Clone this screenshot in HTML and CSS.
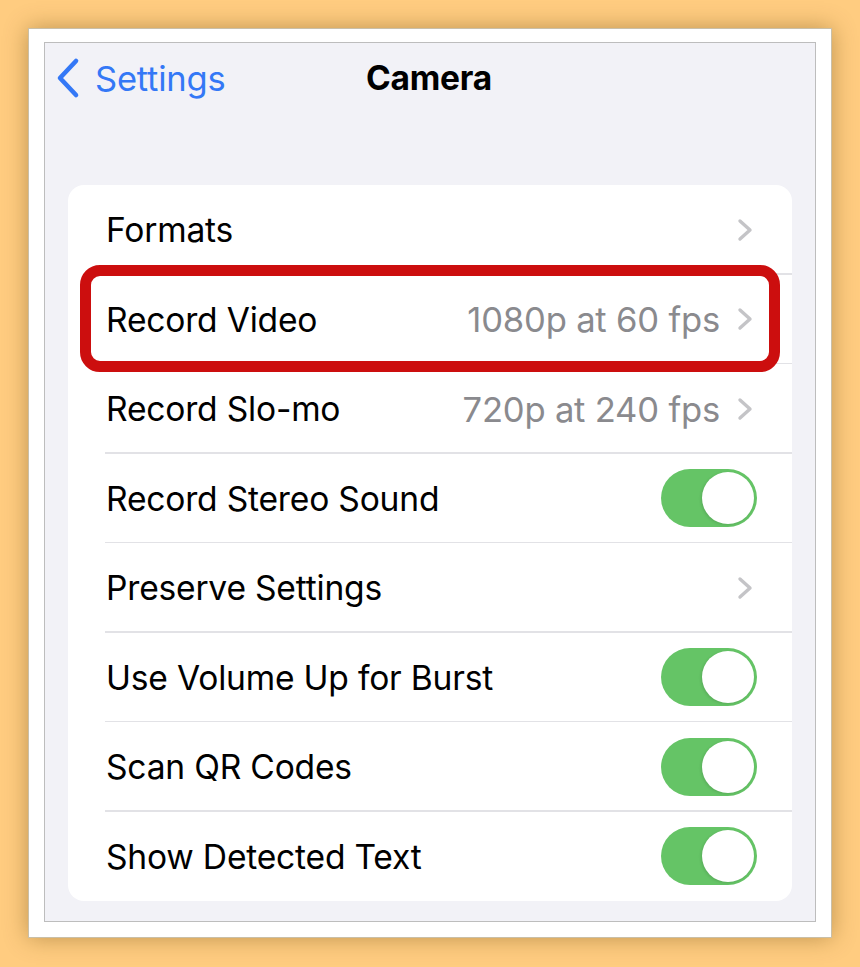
FILE: index.html
```html
<!DOCTYPE html>
<html>
<head>
<meta charset="utf-8">
<link rel="stylesheet" href="styles.css">
</head>
<body>
<div class="frame">
  <div class="screen">
    <div class="nav">
      <div class="back">
        <svg class="back-icon" width="26" height="42" viewBox="0 0 26 42"><polyline points="21,4 5,21 21,38" fill="none" stroke="#3478F6" stroke-width="4.6" stroke-linecap="round" stroke-linejoin="round"/></svg>
        <span class="back-label">Settings</span>
      </div>
      <div class="title">Camera</div>
    </div>
    <div class="card">
      <div class="row"><span class="label">Formats</span><span class="right"><svg class="chev" width="16" height="24" viewBox="0 0 16 24"><polyline points="3,3 13,12 3,21" fill="none" stroke="#C4C4C7" stroke-width="3.4" stroke-linecap="round" stroke-linejoin="round"/></svg></span></div>
      <div class="row"><span class="label">Record Video</span><span class="right"><span class="value">1080p at 60 fps</span><svg class="chev" width="16" height="24" viewBox="0 0 16 24"><polyline points="3,3 13,12 3,21" fill="none" stroke="#C4C4C7" stroke-width="3.4" stroke-linecap="round" stroke-linejoin="round"/></svg></span></div>
      <div class="row"><span class="label">Record Slo-mo</span><span class="right"><span class="value">720p at 240 fps</span><svg class="chev" width="16" height="24" viewBox="0 0 16 24"><polyline points="3,3 13,12 3,21" fill="none" stroke="#C4C4C7" stroke-width="3.4" stroke-linecap="round" stroke-linejoin="round"/></svg></span></div>
      <div class="row"><span class="label">Record Stereo Sound</span><span class="right toggle-wrap"><span class="toggle"><span class="knob"></span></span></span></div>
      <div class="row"><span class="label">Preserve Settings</span><span class="right"><svg class="chev" width="16" height="24" viewBox="0 0 16 24"><polyline points="3,3 13,12 3,21" fill="none" stroke="#C4C4C7" stroke-width="3.4" stroke-linecap="round" stroke-linejoin="round"/></svg></span></div>
      <div class="row"><span class="label">Use Volume Up for Burst</span><span class="right toggle-wrap"><span class="toggle"><span class="knob"></span></span></span></div>
      <div class="row"><span class="label">Scan QR Codes</span><span class="right toggle-wrap"><span class="toggle"><span class="knob"></span></span></span></div>
      <div class="row last"><span class="label">Show Detected Text</span><span class="right toggle-wrap"><span class="toggle"><span class="knob"></span></span></span></div>
      <div class="highlight"></div>
    </div>
  </div>
</div>
</body>
</html>
```
FILE: styles.css
```css
html, body {
  margin: 0;
  padding: 0;
}
body {
  background: #FFCC80;
  width: 860px;
  height: 967px;
  overflow: hidden;
  font-family: "Inter", "Liberation Sans", sans-serif;
}
.frame {
  margin: 28px 0 0 28px;
  width: 772px;
  height: 895px;
  background: #fff;
  border: 1px solid #c9bfa8;
  box-shadow: 0 0 22px rgba(110, 80, 20, 0.45);
  padding: 13px 15px 0 15px;
}
.screen {
  box-sizing: border-box;
  width: 772px;
  height: 880px;
  border: 1px solid #bdbdbd;
  background: #F2F2F7;
  display: flex;
  flex-direction: column;
  padding: 0 23px;
}
.nav {
  position: relative;
  height: 70px;
  display: flex;
  align-items: center;
  justify-content: center;
  margin-bottom: 72px;
}
.back {
  position: absolute;
  left: -13px;
  top: 0;
  height: 70px;
  display: flex;
  align-items: center;
  gap: 14px;
}
.back-icon {
  display: block;
}
.back-label {
  color: #3478F6;
  font-size: 34.5px;
  letter-spacing: -0.2px;
}
.title {
  font-size: 33.5px;
  font-weight: 700;
  color: #000;
  letter-spacing: -0.2px;
  margin-left: -2px;
}
.card {
  position: relative;
  background: #fff;
  border-radius: 16px;
  display: flex;
  flex-direction: column;
}
.row {
  position: relative;
  height: 89.5px;
  display: flex;
  align-items: center;
  justify-content: space-between;
  padding: 0 38px 0 38px;
}
.row::after {
  content: "";
  position: absolute;
  left: 37px;
  right: 0;
  bottom: 0;
  height: 1.5px;
  background: #e2e2e6;
}
.row.last::after {
  display: none;
}
.label {
  font-size: 33.6px;
  color: #000;
  letter-spacing: -0.2px;
}
.right {
  display: flex;
  align-items: center;
  gap: 17px;
  margin-right: 1px;
}
.value {
  font-size: 34.6px;
  color: #8A8A8E;
  letter-spacing: -0.2px;
}
.chev {
  display: block;
}
.toggle-wrap {
  margin-right: -3px;
}
.toggle {
  width: 96px;
  height: 58px;
  border-radius: 29px;
  background: #65C466;
  display: flex;
  align-items: center;
  justify-content: flex-end;
  padding: 0 3px;
  box-sizing: border-box;
}
.knob {
  width: 52px;
  height: 52px;
  border-radius: 50%;
  background: #fff;
  box-shadow: -1px 1px 3px rgba(0, 0, 0, 0.12);
}
.highlight {
  position: absolute;
  left: 12px;
  top: 80px;
  width: 700px;
  height: 107px;
  border: 11px solid #CC0E0E;
  border-radius: 20px;
  box-sizing: border-box;
  pointer-events: none;
}
```
